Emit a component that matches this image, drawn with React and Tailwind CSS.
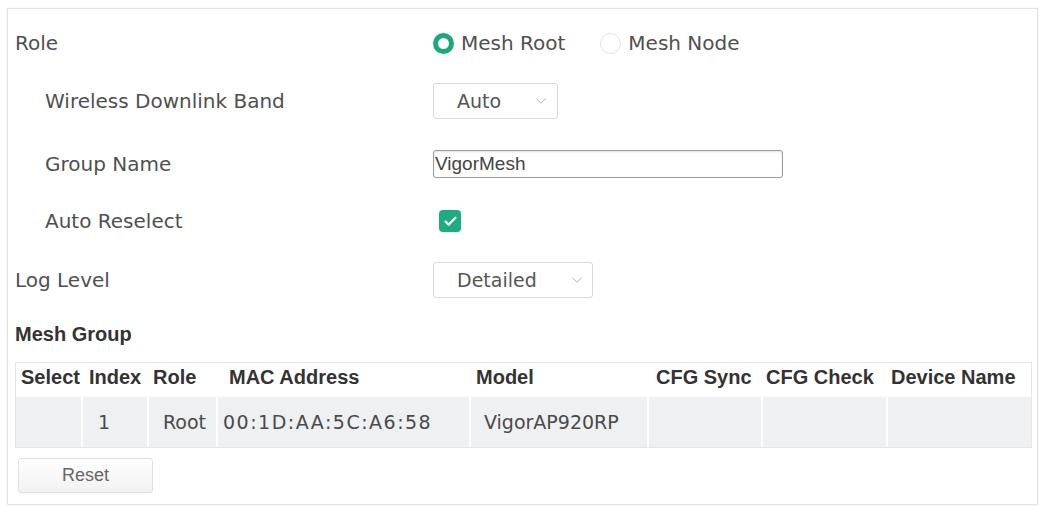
import { ChevronDown, Check } from 'lucide-react';

const labelFont = { fontFamily: '"DejaVu Sans", Verdana, sans-serif' };

const Row = ({ label, indent, height, children }) => (
  <div className={`flex items-center ${height}`}>
    <div
      className={`w-[425px] flex-shrink-0 text-[20px] text-[#505050] ${indent ? 'pl-[37px]' : 'pl-[7px]'}`}
      style={labelFont}
    >
      {label}
    </div>
    <div className="flex items-center">{children}</div>
  </div>
);

const Select = ({ value, width, chevronGap }) => (
  <div
    className={`flex items-center h-[36px] ${width} border border-[#dadada] rounded-[3px] bg-white pl-[23px] text-[19px] text-[#555]`}
    style={labelFont}
  >
    <span>{value}</span>
    <ChevronDown className={`w-[18px] h-[18px] text-[#b0b0b0] ${chevronGap}`} strokeWidth={1.3} />
  </div>
);

const Radio = ({ checked, label }) => (
  <div className="flex items-center">
    {checked ? (
      <div className="w-[21px] h-[21px] rounded-full border-[5px] border-[#1fa77c] bg-white" />
    ) : (
      <div className="w-[21px] h-[21px] rounded-full border border-[#e2e2e2] bg-white" />
    )}
    <span className="ml-[7px] text-[20px] text-[#505050]" style={labelFont}>
      {label}
    </span>
  </div>
);

const columns = [
  { key: 'select', title: 'Select', w: 'w-[67px]', hp: 'pl-[5px]' },
  { key: 'index', title: 'Index', w: 'w-[66px]', hp: 'pl-[6px]' },
  { key: 'role', title: 'Role', w: 'w-[69px]', hp: 'pl-[4px]' },
  { key: 'mac', title: 'MAC Address', w: 'w-[253px]', hp: 'pl-[11px]' },
  { key: 'model', title: 'Model', w: 'w-[178px]', hp: 'pl-[5px]' },
  { key: 'sync', title: 'CFG Sync', w: 'w-[114px]', hp: 'pl-[7px]' },
  { key: 'check', title: 'CFG Check', w: 'w-[125px]', hp: 'pl-[3px]' },
  { key: 'name', title: 'Device Name', w: 'w-[143px]', hp: 'pl-[3px]' },
];

const rows = [
  { select: '', index: '1', role: 'Root', mac: '00:1D:AA:5C:A6:58', model: 'VigorAP920RP', sync: '', check: '', name: '' },
];

const dataPad = {
  select: 'pl-0',
  index: 'pl-[15px]',
  role: 'pl-[14px]',
  mac: 'pl-[5px] tracking-[1.5px]',
  model: 'pl-[13px]',
  sync: 'pl-0',
  check: 'pl-0',
  name: 'pl-0',
};

export default function App() {
  return (
    <div className="w-[1043px] h-[507px] bg-white overflow-hidden pt-[8px] pl-[7px]">
      <div className="w-[1031px] h-[497px] border border-[#e2e2e2] shadow-[0_0_3px_rgba(0,0,0,0.06)] flex flex-col">
        <Row label="Role" height="h-[68px]">
          <Radio checked label="Mesh Root" />
          <div className="ml-[35px]">
            <Radio label="Mesh Node" />
          </div>
        </Row>

        <Row label="Wireless Downlink Band" indent height="h-[48px]">
          <Select value="Auto" width="w-[125px]" chevronGap="ml-[31px]" />
        </Row>

        <Row label="Group Name" indent height="h-[78px]">
          <div
            className="w-[350px] h-[28px] border-[1.5px] border-[#9c9c9c] rounded-[3px] pl-[1px] flex items-center text-[19px] text-[#444] shadow-[inset_0_1px_2px_rgba(0,0,0,0.12)]"
            style={{ fontFamily: '"Liberation Sans", Arial, sans-serif' }}
          >
            VigorMesh
          </div>
        </Row>

        <Row label="Auto Reselect" indent height="h-[36px]">
          <div className="ml-[6px] w-[22px] h-[22px] rounded-[4px] bg-[#1fab80] flex items-center justify-center">
            <Check className="w-[15px] h-[15px] text-white" strokeWidth={3.5} />
          </div>
        </Row>

        <Row label="Log Level" height="h-[82px]">
          <Select value="Detailed" width="w-[160px]" chevronGap="ml-[31px]" />
        </Row>

        <div
          className="h-[26px] flex items-center pl-[7px] text-[20px] font-bold text-[#333]"
          style={{ fontFamily: '"Liberation Sans", Arial, sans-serif' }}
        >
          Mesh Group
        </div>

        <div className="mt-[15px] ml-[7px] w-[1017px] border border-[#e6e6e6]">
          <div
            className="flex h-[34px] pt-[2px] text-[20px] leading-[24px] font-bold text-[#333] bg-white"
            style={{ fontFamily: '"Liberation Sans", Arial, sans-serif' }}
          >
            {columns.map((c) => (
              <div key={c.key} className={`${c.w} ${c.hp} whitespace-nowrap`}>
                {c.title}
              </div>
            ))}
          </div>
          {rows.map((r, i) => (
            <div key={i} className="flex h-[50px] bg-[#eef0f2] text-[19px] text-[#4a4a4a]" style={labelFont}>
              {columns.map((c) => (
                <div
                  key={c.key}
                  className={`${c.w} ${dataPad[c.key]} flex items-center whitespace-nowrap border-r-2 border-white last:border-r-0`}
                >
                  {r[c.key]}
                </div>
              ))}
            </div>
          ))}
        </div>

        <div className="mt-[10px] ml-[10px]">
          <button
            className="w-[135px] h-[35px] border border-[#e0e0e0] rounded-[3px] bg-gradient-to-b from-white to-[#f2f2f2] text-[18px] text-[#666]"
            style={{ fontFamily: '"Liberation Sans", Arial, sans-serif' }}
          >
            Reset
          </button>
        </div>
      </div>
    </div>
  );
}
